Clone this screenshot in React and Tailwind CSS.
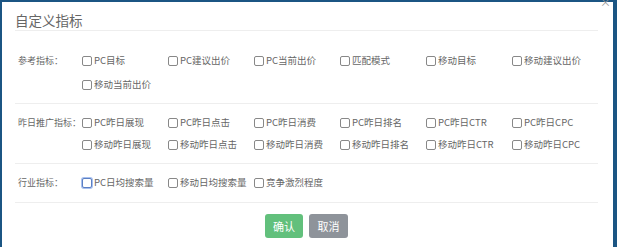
const font = { fontFamily: '"Noto Sans CJK SC", "Liberation Sans", sans-serif' }

const sections = [
    {
        label: "参考指标：",
        items: ["PC目标", "PC建议出价", "PC当前出价", "匹配模式", "移动目标", "移动建议出价", "移动当前出价"],
        rowH: "h-6",
        pad: "pt-[18px] pb-[6px]",
    },
    {
        label: "昨日推广指标：",
        items: [
            "PC昨日展现", "PC昨日点击", "PC昨日消费", "PC昨日排名", "PC昨日CTR", "PC昨日CPC",
            "移动昨日展现", "移动昨日点击", "移动昨日消费", "移动昨日排名", "移动昨日CTR", "移动昨日CPC",
        ],
        rowH: "h-[22px]",
        pad: "pt-[8px] pb-[7px]",
    },
    {
        label: "行业指标：",
        items: ["PC日均搜索量", "移动日均搜索量", "竞争激烈程度"],
        rowH: "h-[22px]",
        pad: "pt-[8px] pb-[8px]",
        focus: 0,
    },
]

function Check({ text, focused }) {
    return (
        <label className="flex items-center gap-[2px] text-[9.5px] leading-none text-[#666] whitespace-nowrap">
            <span
                className={
                    focused
                        ? "w-[10px] h-[10px] rounded-[2px] border border-[#5b7fc4] bg-white ring-1 ring-[#a9c1ee] flex-shrink-0"
                        : "w-[10px] h-[10px] rounded-[2px] border border-[#888] bg-white flex-shrink-0"
                }
            ></span>
            <span>{text}</span>
        </label>
    )
}

export default function App() {
    return (
        <div className="w-[617px] h-[247px] bg-[#1b5583] pt-[2px] pl-[2px] pr-[4px] overflow-hidden" style={font}>
            <div className="relative bg-white h-full pl-[13px] pr-[15px]">
                <span className="absolute right-[2px] top-[-5px] text-[11px] leading-none text-[#999]">×</span>

                <div className="h-[29px] flex items-end pb-[3px] border-b border-[#eee]">
                    <span className="text-[13.5px] text-[#666] leading-none">自定义指标</span>
                </div>

                {sections.map((s, i) => (
                    <div key={i} className={`flex border-b border-[#eee] ${s.pad}`}>
                        <div className={`w-[67px] flex-shrink-0 pl-[3px] flex items-center whitespace-nowrap text-[9px] text-[#666] ${s.rowH}`}>
                            {s.label}
                        </div>
                        <div className="grid grid-cols-[repeat(6,86px)]">
                            {s.items.map((t, j) => (
                                <div key={j} className={`flex items-center ${s.rowH}`}>
                                    <Check text={t} focused={s.focus === j} />
                                </div>
                            ))}
                        </div>
                    </div>
                ))}

                <div className="flex justify-center gap-[6px] pt-[11px]">
                    <button className="w-[38px] h-[24px] rounded-[3px] bg-[#62c07c] text-white text-[11px]">确认</button>
                    <button className="w-[39px] h-[24px] rounded-[3px] bg-[#8e939a] text-white text-[11px]">取消</button>
                </div>
            </div>
        </div>
    )
}
